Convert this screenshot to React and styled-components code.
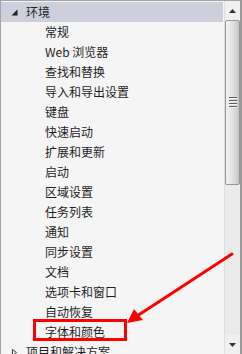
import React from 'react'
import styled, { createGlobalStyle } from 'styled-components'

const GlobalStyle = createGlobalStyle`
  html, body {
    margin: 0;
    padding: 0;
    background: #f5f5f5;
  }
`

const Frame = styled.div`
  position: relative;
  width: 242px;
  height: 354px;
  box-sizing: border-box;
  border-top: 1px solid #a3a3a3;
  border-left: 1px solid #a3a3a3;
  border-right: 2px solid #9a9a9a;
  background: #f5f5f5;
  display: flex;
  overflow: hidden;
  font-family: "Noto Sans CJK SC", "Microsoft YaHei", sans-serif;
  font-size: 12px;
  color: #1e1e1e;
`

const List = styled.div`
  position: relative;
  flex: 1;
  padding: 1px 1px 0 0;
  display: flex;
  flex-direction: column;
`

const Row = styled.div`
  height: 20px;
  flex: none;
  display: flex;
  align-items: center;
  padding-left: ${p => (p.$child ? 44 : 10)}px;
  background: ${p => (p.$selected ? '#cdcfdc' : 'transparent')};
  white-space: nowrap;
`

const Toggle = styled.svg`
  width: 7px;
  height: 7px;
  margin-right: 8px;
  flex: none;
`

const Label = styled.span`
  line-height: 20px;
`

const Scrollbar = styled.div`
  width: 16px;
  flex: none;
  display: flex;
  flex-direction: column;
  background: #ebebeb;
  border-left: 1px solid #e0e0e0;
  box-sizing: border-box;
`

const ArrowButton = styled.div`
  height: 19px;
  flex: none;
  display: flex;
  align-items: center;
  justify-content: center;
  background: #f0f0f0;
`

const Track = styled.div`
  flex: 1;
  display: flex;
  flex-direction: column;
`

const Thumb = styled.div`
  height: 165px;
  box-sizing: border-box;
  border: 1px solid #969696;
  border-radius: 2px;
  background: linear-gradient(to right, #f2f2f2 0%, #e6e6e6 40%, #d2d2d2 80%, #c4c4c4 100%);
  display: flex;
  align-items: center;
  justify-content: center;
`

const Grip = styled.div`
  width: 8px;
  display: flex;
  flex-direction: column;
  gap: 1px;
  margin-top: 0;
`

const GripLine = styled.div`
  height: 1px;
  border-top: 1px solid #5e5e5e;
  border-bottom: 0;
  background: #f4f4f4;
  &:not(:last-child) { margin-bottom: 0; }
`

const Callout = styled.div`
  position: absolute;
  left: 32px;
  top: 318px;
  width: 94px;
  height: 22px;
  box-sizing: border-box;
  border: 3px solid #ff0000;
  pointer-events: none;
`

const Overlay = styled.svg`
  position: absolute;
  left: -1px;
  top: -1px;
  width: 242px;
  height: 354px;
  pointer-events: none;
`

const children = [
  '常规', 'Web 浏览器', '查找和替换', '导入和导出设置', '键盘', '快速启动',
  '扩展和更新', '启动', '区域设置', '任务列表', '通知', '同步设置', '文档',
  '选项卡和窗口', '自动恢复', '字体和颜色',
]

const Expanded = () => (
  <Toggle viewBox="0 0 7 7">
    <path d="M6.5 0.5 L6.5 6.5 L0.5 6.5 Z" fill="#1e1e1e" />
  </Toggle>
)

const Collapsed = () => (
  <Toggle viewBox="0 0 7 7">
    <path d="M1.5 0.5 L5.5 3.5 L1.5 6.5 Z" fill="none" stroke="#3c3c3c" strokeWidth="1" />
  </Toggle>
)

export default function App() {
  return (
    <>
      <GlobalStyle />
      <Frame>
        <List>
          <Row $selected>
            <Expanded />
            <Label>环境</Label>
          </Row>
          {children.map(c => (
            <Row key={c} $child>
              <Label>{c}</Label>
            </Row>
          ))}
          <Row>
            <Collapsed />
            <Label>项目和解决方案</Label>
          </Row>
          <Callout />
        </List>
        <Scrollbar>
          <ArrowButton>
            <svg width="7" height="4" viewBox="0 0 7 4">
              <path d="M3.5 0 L7 4 L0 4 Z" fill="#333" />
            </svg>
          </ArrowButton>
          <Track>
            <Thumb>
              <Grip>
                <GripLine />
                <GripLine />
                <GripLine />
                <GripLine />
              </Grip>
            </Thumb>
          </Track>
          <ArrowButton>
            <svg width="7" height="4" viewBox="0 0 7 4">
              <path d="M0 0 L7 0 L3.5 4 Z" fill="#333" />
            </svg>
          </ArrowButton>
        </Scrollbar>
        <Overlay viewBox="0 0 242 354">
          <line x1="232" y1="254" x2="137" y2="316" stroke="#ff0000" strokeWidth="3" strokeLinecap="round" />
          <path d="M127 323 L134 309 L143 320 Z" fill="#ff0000" />
        </Overlay>
      </Frame>
    </>
  )
}
